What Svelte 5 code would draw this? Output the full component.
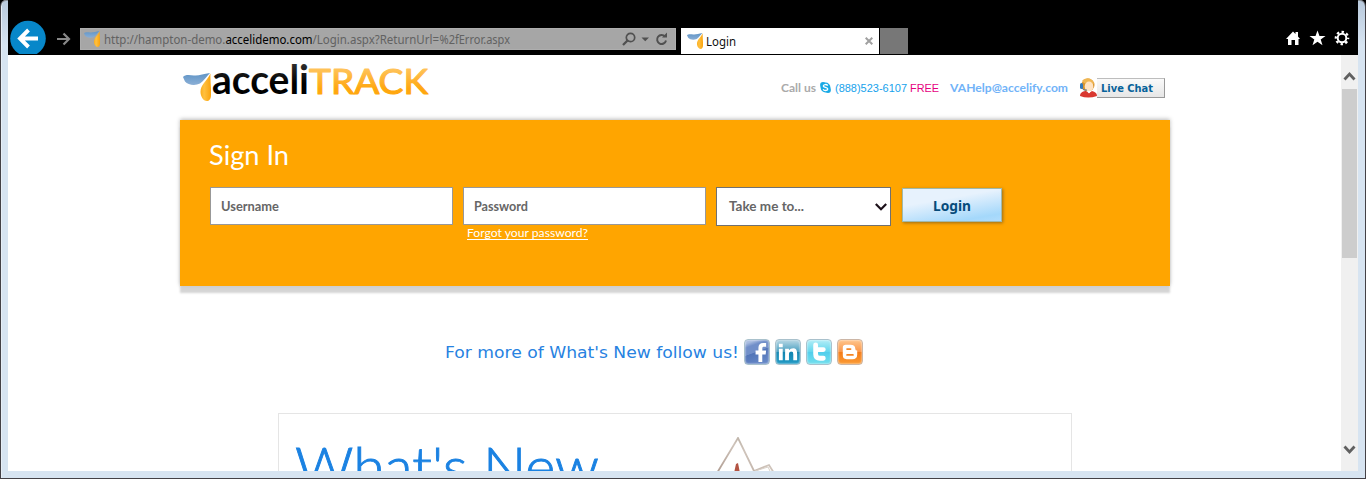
<script>
  const socials = ['facebook', 'linkedin', 'twitter', 'blogger'];
</script>

{#snippet label(text, width, height, base, cls)}
  <svg class="label {cls}" {width} {height} role="img" aria-label={text}>
    <text x="0" y={base} textLength={width} lengthAdjust="spacingAndGlyphs">{text}</text>
  </svg>
{/snippet}

{#snippet drop(width, height)}
  <svg {width} {height} viewBox="0 0 28 28" preserveAspectRatio="none" aria-hidden="true">
    <defs>
      <linearGradient id="dropBlue" x1="0" y1="0" x2="0" y2="1">
        <stop offset="0" stop-color="#5f94c6" /><stop offset="1" stop-color="#8bafd6" />
      </linearGradient>
      <linearGradient id="dropGold" x1="0" y1="0" x2="1" y2="0">
        <stop offset="0" stop-color="#fbad1c" /><stop offset=".35" stop-color="#ffc040" /><stop offset="1" stop-color="#faa20b" />
      </linearGradient>
    </defs>
    <path d="M0 4C2 1.500 6 2 11 2.500C16 3 20 1 27 0C23 4 21 8 17 10.500C12 13 5 12 2 8.500Z" fill="url(#dropBlue)" />
    <path d="M27.500 .5C27 8 28.500 16 28 22C28 26 26 28 24 28C20 28 17.500 23 17.500 19C17.500 12 23 9 27.500 .5Z" fill="url(#dropGold)" />
  </svg>
{/snippet}

<div class="window">
  <div class="screen">
    <header class="chrome">
      <svg class="back" width="36" height="34" viewBox="0 0 36 34">
        <circle cx="18" cy="18.5" r="17.8" fill="#0787c9" />
        <path d="M28 18.500H11M18.500 10L10 18.500L18.500 27" fill="none" stroke="#fff" stroke-width="3.9" />
      </svg>
      <svg class="forward" width="14" height="14" viewBox="0 0 14 14">
        <path d="M0 7H12M6.500 1.500L12 7L6.500 12.500" fill="none" stroke="#888" stroke-width="2.2" />
      </svg>
      <div class="address">
        {@render drop(16, 16)}
        <svg class="label url" width="406" height="20">
          <text x="0" y="15" textLength="335" lengthAdjust="spacingAndGlyphs">http://hampton-demo.<tspan fill="#000">accelidemo.com</tspan>/Login.aspx?ReturnUrl=</text>
          <text x="335.5" y="15" textLength="70.5" lengthAdjust="spacingAndGlyphs">%2fError.aspx</text>
        </svg>
        <svg class="tools" width="48" height="16" viewBox="0 0 48 16">
          <g fill="none" stroke="#505050">
            <circle cx="8.500" cy="6.500" r="4.200" stroke-width="1.700" />
            <path d="M5.500 9.500L1 14" stroke-width="2.300" />
            <path d="M43 5.500A4.500 4.500 0 1 0 44 9.500" stroke-width="2" />
          </g>
          <path d="M19.500 6.500H27L23.250 10.300ZM40 6.500H45V1.500Z" fill="#505050" />
        </svg>
      </div>
      <div class="tab">
        {@render drop(16, 16)}
        {@render label('Login', 30, 20, 15, 'tabname')}
        <svg class="close" width="8" height="8" viewBox="0 0 8 8"><path d="M.7 .7L7.300 7.300M7.300 .7L.7 7.300" stroke="#a0a0a0" stroke-width="2" /></svg>
      </div>
      <div class="newtab"></div>
      <svg class="actions" width="64" height="16" viewBox="0 0 64 16">
        <path d="M0 9L7 1.500L9.500 4V2H12V6.500L14 9H12.500V15H9V10H5.500V15H2V9Z" fill="#fff" />
        <path d="M31.500 .5L33.500 6H39.500L34.700 9.500L36.500 15.200L31.500 11.800L26.500 15.200L28.300 9.500L23.500 6H29.500Z" fill="#fff" />
        <circle cx="56" cy="8" r="4.300" fill="none" stroke="#fff" stroke-width="2" />
        <circle cx="56" cy="8" r="6.200" fill="none" stroke="#fff" stroke-width="2.200" stroke-dasharray="2.435 2.435" stroke-dashoffset="1.217" />
      </svg>
    </header>

    <div class="viewport">
      <main>
        <div class="masthead">
          <div class="logo">
            {@render drop(28, 28)}
            <svg class="wordmark" width="217" height="42" viewBox="0 0 217 42">
              <defs>
                <linearGradient id="ink" x1="0" y1="0" x2="0" y2="1"><stop offset="0" stop-color="#444" /><stop offset=".6" stop-color="#000" /></linearGradient>
                <linearGradient id="gold" x1="0" y1="0" x2="0" y2="1"><stop offset=".2" stop-color="#ffc45c" /><stop offset=".7" stop-color="#ffa70f" /></linearGradient>
              </defs>
              <text x="0" y="31" textLength="97" lengthAdjust="spacingAndGlyphs" fill="url(#ink)">acceli</text>
              <text class="track" x="97" y="31" textLength="119" lengthAdjust="spacingAndGlyphs" fill="url(#gold)" stroke="url(#gold)" stroke-width="1.1" stroke-linejoin="round">TRACK</text>
            </svg>
          </div>
          <div class="contact">
            {@render label('Call us', 35, 18, 13, 'call')}
            <svg class="skype" width="11" height="11" viewBox="0 0 11 11">
              <circle cx="5.500" cy="5.500" r="4.900" fill="#18a9e5" /><circle cx="3" cy="3" r="2.900" fill="#18a9e5" /><circle cx="8" cy="8" r="2.900" fill="#18a9e5" />
              <path d="M7.700 3.600C6.800 2 3.300 2.200 3.300 4C3.300 5.700 7.800 5 7.800 7C7.800 8.900 4 9 3.100 7.200" fill="none" stroke="#fff" stroke-width="1.300" />
            </svg>
            {@render label('(888)523-6107', 72, 18, 13, 'phone')}
            {@render label('FREE', 29, 18, 13, 'free')}
            {@render label('VAHelp@accelify.com', 118, 18, 13, 'mail')}
            <div class="chat">
              <svg class="agent" width="18" height="20" viewBox="0 0 18 20">
                <circle cx="9" cy="7" r="6.500" fill="#d9942d" />
                <path d="M3 3C6-1 13-1 15 5L13 8L5 5Z" fill="#efb653" />
                <ellipse cx="10" cy="8.500" rx="4.300" ry="5" fill="#ffe3c2" />
                <path d="M1 18C1 14 5 13 7 13L10 15L13 13C16 14 18 15 18 18Q9 21 1 18Z" fill="#d93830" />
                <path d="M8 13L10 15.500L12 13Z" fill="#fff" />
                <rect x="1" y="5" width="3" height="6" rx="1.500" fill="#3278b8" />
                <path d="M3 10Q4 13 8 12" fill="none" stroke="#557798" />
              </svg>
              {@render label('Live Chat', 52, 18, 13, 'chatname')}
            </div>
          </div>
        </div>

        <section class="signin">
          {@render label('Sign In', 80, 38, 28, 'heading')}
          <div class="fields">
            <div class="field">{@render label('Username', 58, 20, 15, 'hint')}</div>
            <div class="field">{@render label('Password', 54, 20, 15, 'hint')}</div>
            <div class="field select">
              {@render label('Take me to...', 75, 20, 14, 'hint')}
              <svg width="12" height="8" viewBox="0 0 12 8"><path d="M.8 1L6 6.200L11.200 1" fill="none" stroke="#1c1019" stroke-width="2.200" /></svg>
            </div>
            <div class="login">{@render label('Login', 38, 24, 18, 'loginname')}</div>
          </div>
          <div class="forgot">{@render label('Forgot your password?', 121, 15, 11, 'forgotname')}</div>
        </section>

        <div class="follow">
          {@render label("For more of What's New follow us!", 294, 26, 20, 'followname')}
          {#each socials as name}
            <div class="social {name}">
              <svg width="24" height="24" viewBox="0 0 25 25">
                {#if name === 'facebook'}
                  <path d="M14 23V15H11V11H14V8Q14 3 19 3H22V7H19Q18 7 18 9V11H22L21.500 15H18V23Z" fill="#fff" />
                {:else if name === 'linkedin'}
                  <path d="M3 9H7V21H3ZM3 4H7V7.500H3ZM9.500 9H13.500V10.800Q15 8.500 18 8.500Q22 8.500 22 14V21H18V14.500Q18 12 16 12Q13.500 12 13.500 15V21H9.500Z" fill="#fff" />
                {:else if name === 'twitter'}
                  <path d="M9 5V14.500Q9 19 13.500 19H17M9 10H17" fill="none" stroke="#fff" stroke-width="5" stroke-linecap="round" />
                {:else}
                  <path d="M8 5H13Q18 5 18 9Q18 11 20 11V15Q20 20 15 20H9Q5 20 5 16V8Q5 5 8 5Z" fill="#fff" />
                  <path d="M9.500 9.500H13M9.500 15.500H15.500" stroke="#f58522" stroke-width="2" stroke-linecap="round" />
                {/if}
              </svg>
            </div>
          {/each}
        </div>

        <section class="news">
          {@render label("What's New", 304, 70, 57, 'newsname')}
          <svg class="emblem" width="64" height="36" viewBox="0 0 64 36">
            <defs><linearGradient id="stone" x1="0" y1="1" x2="1" y2="0"><stop offset="0" stop-color="#b09d92" /><stop offset=".55" stop-color="#cfc4bb" /><stop offset="1" stop-color="#9d9384" /></linearGradient></defs>
            <path d="M1 36L22 1L38 34L53 28L58 36" fill="none" stroke="url(#stone)" stroke-width="1.800" />
            <path d="M18 36L20 27L22 26L24 36Z" fill="#b35443" />
            <path d="M39 34L52 30L55 36" fill="none" stroke="#d9d1c8" />
          </svg>
        </section>
      </main>
      <aside class="scrollbar">
        <svg width="13" height="11" viewBox="0 0 13 11"><path d="M1.500 8.500L6.500 3L11.500 8.500" fill="none" stroke="#606060" stroke-width="2.800" /></svg>
        <div class="thumb"></div>
        <svg class="down" width="13" height="11" viewBox="0 0 13 11"><path d="M1.500 2.500L6.500 8L11.500 2.500" fill="none" stroke="#606060" stroke-width="2.800" /></svg>
      </aside>
    </div>
  </div>
</div>

<style>
  :global(body) { margin: 0; background: #000; overflow: hidden; }
  * { box-sizing: border-box; }
  svg { display: block; flex: none; }
  .label { overflow: visible; }
  .window {
    width: 1366px; height: 479px; padding: 0 7px 7px; overflow: hidden;
    border: 1px solid #444146; border-top: 0; border-radius: 6px 6px 0 0;
    background: linear-gradient(#b8c9dc, #d7e4f1 45px);
    box-shadow: inset 0 1px #8b929a, inset 1px 0 #e7eff7;
  }
  .screen { height: 471px; overflow: hidden; background: #fff; }
  .chrome { display: flex; align-items: flex-start; height: 55px; padding: 21px 8px 0 2px; background: #000; }
  .back { margin-top: -1px; }
  .forward { margin: 11px 0 0 11px; }
  .address { display: flex; align-items: center; width: 596px; height: 22px; margin: 7px 0 0 9px; padding: 0 5px 0 3px; background: #a6a6a6; border: 1px solid #aeaeae; }
  .url { margin-left: 4px; font: 12px "Noto Sans", sans-serif; fill: #626262; }
  .tools { margin-left: auto; }
  .tab { display: flex; align-items: center; width: 198px; height: 26px; margin: 7px 0 0 5px; padding: 0 6px 0 6px; background: #fff; }
  .tabname { margin-left: 3px; font: 12px "Noto Sans", sans-serif; fill: #111; }
  .close { margin-left: auto; }
  .newtab { width: 28px; height: 26px; margin: 7px 0 0 1px; background: #777; }
  .actions { margin: 9px 0 0 auto; }
  .viewport { display: flex; height: 416px; }
  main { width: 1333px; padding: 0 171px 0 172px; }
  .masthead { display: flex; justify-content: space-between; height: 65px; padding: 8px 5px 0 3px; }
  .logo { display: flex; }
  .logo > :global(svg:first-child) { margin-top: 10px; }
  .wordmark { margin-left: 1px; font: 700 41px Lato, sans-serif; overflow: visible; }
  .track { font-weight: 400; font-size: 34px; }
  .contact { display: flex; align-items: flex-start; padding-top: 16px; }
  .call { font: 700 11px Lato, sans-serif; fill: #aaa; }
  .skype { margin: 3px 4px 0; }
  .phone { font: 11px "Liberation Sans", sans-serif; fill: #16a2ec; }
  .free { margin-left: 3px; font: 11px "Liberation Sans", sans-serif; fill: #e6007e; }
  .mail { margin-left: 11px; font: 700 11px Lato, sans-serif; fill: #71b3f8; }
  .chat { display: flex; width: 86px; height: 20px; margin: -1px 0 0 11px; border: 1px solid #bdbdbd; border-right-color: #999; border-bottom-color: #999; background: linear-gradient(#fafafa, #e6e6e6); }
  .agent { margin: -1px 3px 0 -1px; background: #fff; }
  .chatname { margin-left: 1px; font: 700 10.5px "DejaVu Sans", sans-serif; fill: #07629a; }
  .signin { height: 166px; padding: 17px 0 0 29px; background: #ffa500; box-shadow: 0 -1px 4px #bbb, 0 7px 2px #d5d5d5; }
  .heading { font: 400 26px Lato, sans-serif; fill: #fff; }
  .fields { display: flex; height: 41px; margin: 12px 0 0 1px; }
  .field { display: flex; align-items: center; width: 243px; height: 38px; margin-right: 10px; padding: 0 3px 0 10px; border: 1px solid #989898; background: #fff; }
  .select { justify-content: space-between; width: 175px; height: 39px; padding-left: 12px; border-color: #707070; }
  .hint { font: 700 12.500px Lato, sans-serif; fill: #666; }
  .login { display: flex; align-items: center; justify-content: center; width: 100px; height: 34px; padding-right: 1px; margin: 1px 0 0 1px; border: 1px solid #9fb9ac; box-shadow: 1px 1px 3px #9a6c19; background: linear-gradient(170deg, #e7f2fd 35%, #c6e5fc 60%, #a4d8fb 85%, #b0dcfc); }
  .loginname { font: 700 14px "Noto Sans", sans-serif; fill: #064b7a; }
  .forgot { width: 121px; margin: -2px 0 0 258px; border-bottom: 1px solid #fff; height: 14px; }
  .forgotname { font: 11.500px Lato, sans-serif; fill: #fff; }
  .follow { display: flex; height: 27px; margin: 52px 0 0 265px; }
  .followname { margin-right: 5px; font: 16px "DejaVu Sans", sans-serif; fill: #2782e1; }
  .social { width: 26px; height: 26px; margin: 1px 5px 0 0; border: 1px solid #a9c1cc; border-radius: 4px; box-shadow: inset 0 0 2px #fff; overflow: hidden; }
  .facebook { background: linear-gradient(160deg, #a9bce0 0 12%, #718fc9 25% 48%, #5275b8 50%, #6a8cca); }
  .linkedin { background: linear-gradient(#a7cfdf 8%, #4aa0c1 48%, #1184b0 50%, #249bc5); }
  .twitter { background: linear-gradient(#b2edf7, #64d7ed 48%, #50ceec 50%, #73dfed); }
  .blogger { background: linear-gradient(#ffc58c, #fa974a 48%, #f47b17 50%, #fa9b35); border-color: #ccb6a6; }
  .news { display: flex; width: 794px; height: 90px; margin: 48px 0 0 98px; padding: 16px; border: 1px solid #e5e5e5; }
  .newsname { font: 300 55px Lato, sans-serif; fill: #1b82e2; stroke: #1b82e2; stroke-width: .9px; }
  .emblem { margin: 7px 0 0 117px; }
  .scrollbar { display: flex; flex-direction: column; align-items: center; width: 17px; height: 416px; padding: 16px 0; background: #f0f0f0; }
  .thumb { width: 15px; height: 169px; margin-top: 7px; background: #cdcdcd; }
  .down { margin-top: auto; }
</style>
